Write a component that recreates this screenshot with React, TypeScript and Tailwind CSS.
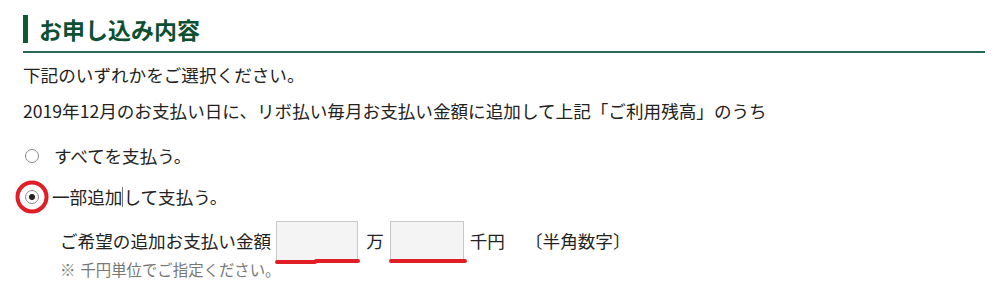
import React from "react";

const FONT = { fontFamily: '"Noto Sans CJK JP", "Noto Sans", sans-serif' };

function Radio({ checked }: { checked?: boolean }) {
  return (
    <span className="relative flex h-[14px] w-[14px] shrink-0 items-center justify-center rounded-full border border-[#8a8a8a] bg-white">
      {checked && <span className="h-[6px] w-[6px] rounded-full bg-[#222]" />}
    </span>
  );
}

export default function App() {
  return (
    <div
      className="h-[304px] w-[997px] overflow-hidden bg-white pr-[12px] pl-[23px] text-[17.6px] text-[#222]"
      style={FONT}
    >
      {/* Heading */}
      <div className="border-b-2 border-[#2a6a52] pt-[15px] pb-[8px]">
        <div className="flex items-center">
          <span className="h-[28px] w-[5px] bg-[#0c5a34]" />
          <span className="ml-[11px] text-[23px] font-bold leading-[28px] text-[#0d4f33]">
            お申し込み内容
          </span>
        </div>
      </div>

      <p className="mt-[10px] leading-[24px]">下記のいずれかをご選択ください。</p>
      <p className="mt-[12px] leading-[24px]">
        2019年12月のお支払い日に、リボ払い毎月お支払い金額に追加して上記「ご利用残高」のうち
      </p>

      {/* Options */}
      <label className="mt-[21px] flex items-center leading-[24px]">
        <span className="ml-[2px]">
          <Radio />
        </span>
        <span className="ml-[15px]">すべてを支払う。</span>
      </label>

      <label className="mt-[17px] flex items-center leading-[24px]">
        <span className="relative ml-[2px]">
          <Radio checked />
          <span className="absolute top-1/2 left-1/2 h-[33px] w-[33px] -translate-x-1/2 -translate-y-1/2 rounded-full border-[4px] border-[#e11d26]" />
        </span>
        <span className="ml-[13px] flex items-center">
          一部追加
          <span className="h-[20px] w-px bg-[#777]" />
          して支払う。
        </span>
      </label>

      {/* Amount */}
      <div className="mt-[12px] flex items-center pl-[37px]">
        <span>ご希望の追加お支払い金額</span>
        <span className="relative ml-[5px]">
          <input className="block h-[40px] w-[82px] border border-[#c8c8c8] bg-[#f4f4f4] outline-none" />
          <span className="absolute top-[39px] left-[-1px] h-[4px] w-[42px] rounded-full bg-[#e11d26]" />
          <span className="absolute top-[38px] left-[38px] h-[4px] w-[46px] rounded-full bg-[#e11d26]" />
        </span>
        <span className="ml-[8px]">万</span>
        <span className="relative ml-[6px]">
          <input className="block h-[40px] w-[74px] border border-[#c8c8c8] bg-[#f4f4f4] outline-none" />
          <span className="absolute top-[38px] left-[-1px] h-[4px] w-[78px] rounded-full bg-[#e11d26]" />
        </span>
        <span className="ml-[6px]">千円</span>
        <span className="ml-[20px]">〔半角数字〕</span>
      </div>
      <p className="flex pl-[37px] text-[15.4px] leading-[16px] text-[#777]">
        <span>※</span>
        <span className="ml-[5px]">千円単位でご指定ください。</span>
      </p>
    </div>
  );
}
